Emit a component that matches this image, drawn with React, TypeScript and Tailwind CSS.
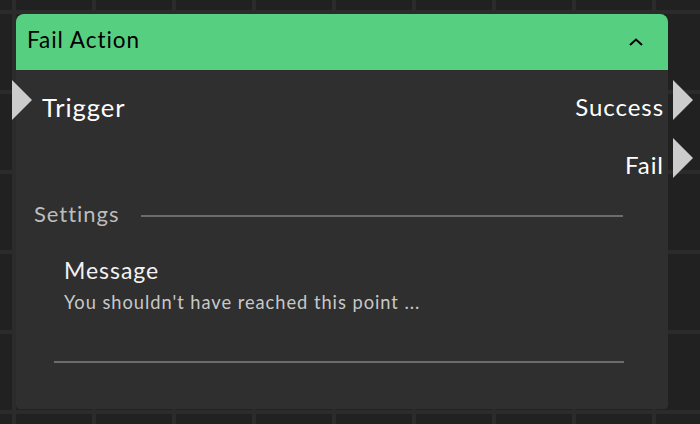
import React from "react";

const Socket = ({ side }: { side: "left" | "right" }) => (
  <div
    className={`absolute top-0 h-0 w-0 border-y-[20px] border-y-transparent border-l-[20px] border-l-[#cccccc] ${
      side === "left" ? "left-[-4px]" : "right-[-25px]"
    }`}
  />
);

const App = () => {
  return (
    <div
      className="w-[700px] h-[424px] overflow-hidden bg-[#212121] pt-[14px] pl-[16px] tracking-[0.06em] [background-image:linear-gradient(to_right,#2b2b2b_4px,transparent_4px),linear-gradient(to_bottom,#2b2b2b_4px,transparent_4px)] [background-size:80px_80px] [background-position:12px_10px]"
      style={{ fontFamily: "Lato, 'Noto Sans', sans-serif" }}
    >
      {/* Node card */}
      <div className="w-[652px] h-[395px] bg-[#2f2f2f] rounded-t-lg rounded-b-[4px] flex flex-col">
        {/* Header */}
        <div className="h-[56px] bg-[#57cf81] rounded-t-lg flex items-center justify-between pl-[11px] pr-[25px]">
          <span className="mb-[5px] text-[22.5px] text-black">Fail Action</span>
          <svg width="14" height="8" viewBox="0 0 14 8" fill="none">
            <path d="M1 7 L7 1.5 L13 7" stroke="#000" strokeWidth="2" />
          </svg>
        </div>

        {/* Sockets */}
        <div className="relative mt-[10px] h-[40px] flex items-start justify-between pl-[26px] pr-[4px] text-white">
          <Socket side="left" />
          <span className="mt-[12px] text-[25.5px] leading-[30px]">Trigger</span>
          <span className="mt-[12px] text-[24px] leading-[30px]">Success</span>
          <Socket side="right" />
        </div>
        <div className="relative mt-[18px] h-[40px] flex items-start justify-end pr-[4px] text-white">
          <span className="mt-[12px] text-[24px] leading-[30px]">Fail</span>
          <Socket side="right" />
        </div>

        {/* Settings */}
        <div className="mt-[22px] flex items-center pl-[18px] pr-[45px]">
          <span className="text-[22px] leading-[28px] text-[#bdbdbd]">Settings</span>
          <div className="mt-[3px] ml-[22px] flex-1 h-[2px] bg-[#6b6c70]" />
        </div>

        <div className="mt-[28px] pl-[48px] flex flex-col">
          <span className="text-[23px] text-[#f2f2f2] leading-[28px]">Message</span>
          <span className="mt-[7px] text-[18.3px] text-[#c8c8c8] leading-[22px]">
            You shouldn't have reached this point ...
          </span>
        </div>

        <div className="mt-[48px] ml-[38px] mr-[44px] h-[2px] bg-[#6b6c70]" />
      </div>
    </div>
  );
};

export default App;
